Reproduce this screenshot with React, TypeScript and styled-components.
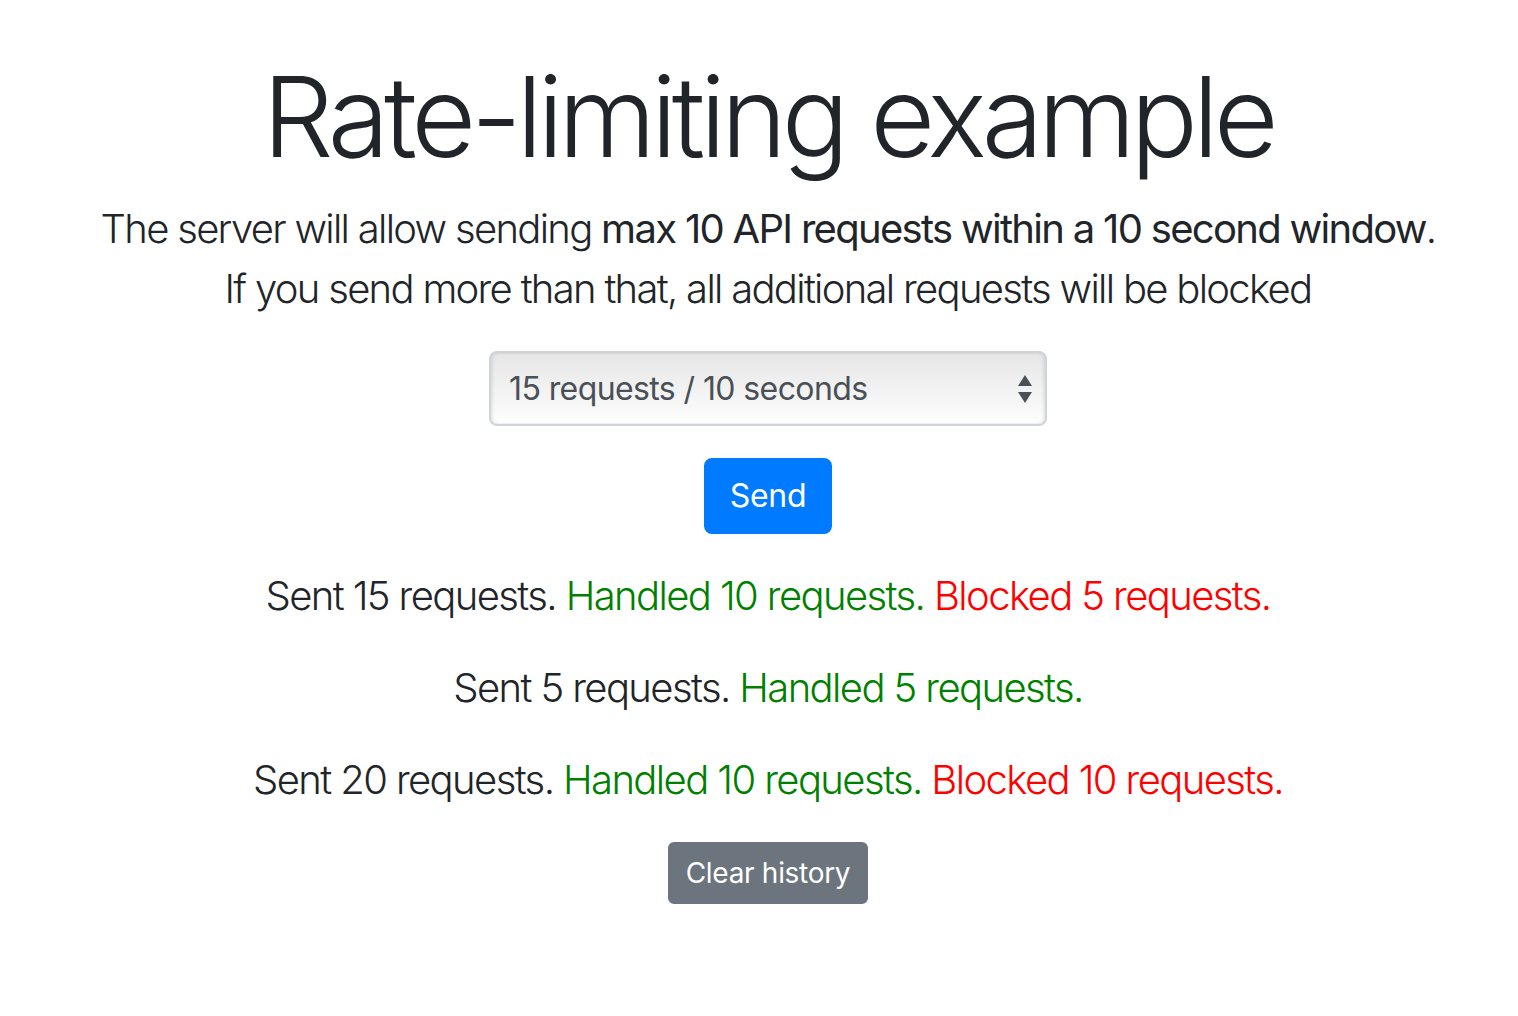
import styled, { createGlobalStyle } from "styled-components";

const GlobalStyle = createGlobalStyle`
  html, body {
    margin: 0;
    padding: 0;
    background: #fff;
  }
  body {
    font-family: Inter, "Noto Sans", "Liberation Sans", sans-serif;
    color: #212529;
  }
`;

const Page = styled.div`
  display: flex;
  flex-direction: column;
  align-items: center;
  padding: 49px 0 0 18px;
  text-align: center;
`;

const Title = styled.h1`
  margin: 0 0 16px;
  font-size: 112px;
  font-weight: 300;
  line-height: 1.2;
  letter-spacing: -5.2px;
`;

const Lead = styled.p`
  margin: 0 0 32px;
  font-size: 40px;
  font-weight: 300;
  line-height: 60px;
  letter-spacing: -1.7px;

  strong {
    font-weight: 400;
  }
`;

const SelectBox = styled.div`
  box-sizing: border-box;
  width: 558px;
  height: 75px;
  margin-bottom: 32px;
  padding: 0 12px 0 18px;
  display: flex;
  align-items: center;
  border: 2px solid #ced4da;
  border-radius: 8px;
  background: linear-gradient(#e6e6e6, #fafafa 85%, #fff);
  box-shadow: inset 2px 0 3px rgba(0, 0, 0, 0.08), inset -2px 0 3px rgba(0, 0, 0, 0.08);
  color: #495057;
  font-size: 32px;
  font-weight: 400;
  letter-spacing: -0.6px;
  text-align: left;
`;

const SelectText = styled.span`
  flex: 1;
`;

const Arrows = styled.svg`
  width: 16px;
  height: 30px;
`;

const Button = styled.button<{ $tone: "primary" | "secondary"; $small?: boolean }>`
  box-sizing: border-box;
  border: 2px solid ${(p) => (p.$tone === "primary" ? "#007bff" : "#6c757d")};
  background: ${(p) => (p.$tone === "primary" ? "#007bff" : "#6c757d")};
  color: #fff;
  font-family: inherit;
  font-weight: 400;
  font-size: ${(p) => (p.$small ? "28px" : "32px")};
  line-height: 1.5;
  letter-spacing: -0.3px;
  padding: ${(p) => (p.$small ? "8px 16px" : "12px 24px")};
  border-radius: ${(p) => (p.$small ? "6px" : "8px")};
  cursor: pointer;
`;

const History = styled.div`
  display: flex;
  flex-direction: column;
  gap: 32px;
  margin: 32px 0 32px;
`;

const Row = styled.div`
  font-size: 40px;
  font-weight: 300;
  line-height: 60px;
  letter-spacing: -1.6px;
`;

const Status = styled.span<{ $kind: "ok" | "blocked" }>`
  color: ${(p) => (p.$kind === "ok" ? "green" : "red")};
`;

const history = [
  { sent: 15, handled: 10, blocked: 5 },
  { sent: 5, handled: 5, blocked: 0 },
  { sent: 20, handled: 10, blocked: 10 },
];

export default function App() {
  return (
    <>
      <GlobalStyle />
      <Page>
        <Title>Rate-limiting example</Title>
        <Lead>
          The server will allow sending <strong>max 10 API requests within a 10 second window</strong>.
          <br />
          If you send more than that, all additional requests will be blocked
        </Lead>
        <SelectBox>
          <SelectText>15 requests / 10 seconds</SelectText>
          <Arrows viewBox="0 0 16 30">
            <path d="M8 1 L15 12 H1 Z" fill="#495057" />
            <path d="M1 18 H15 L8 29 Z" fill="#495057" />
          </Arrows>
        </SelectBox>
        <Button $tone="primary">Send</Button>
        <History>
          {history.map((h, i) => (
            <Row key={i}>
              Sent {h.sent} requests. <Status $kind="ok">Handled {h.handled} requests.</Status>
              {h.blocked > 0 && <> <Status $kind="blocked">Blocked {h.blocked} requests.</Status></>}
            </Row>
          ))}
        </History>
        <Button $tone="secondary" $small>
          Clear history
        </Button>
      </Page>
    </>
  );
}
